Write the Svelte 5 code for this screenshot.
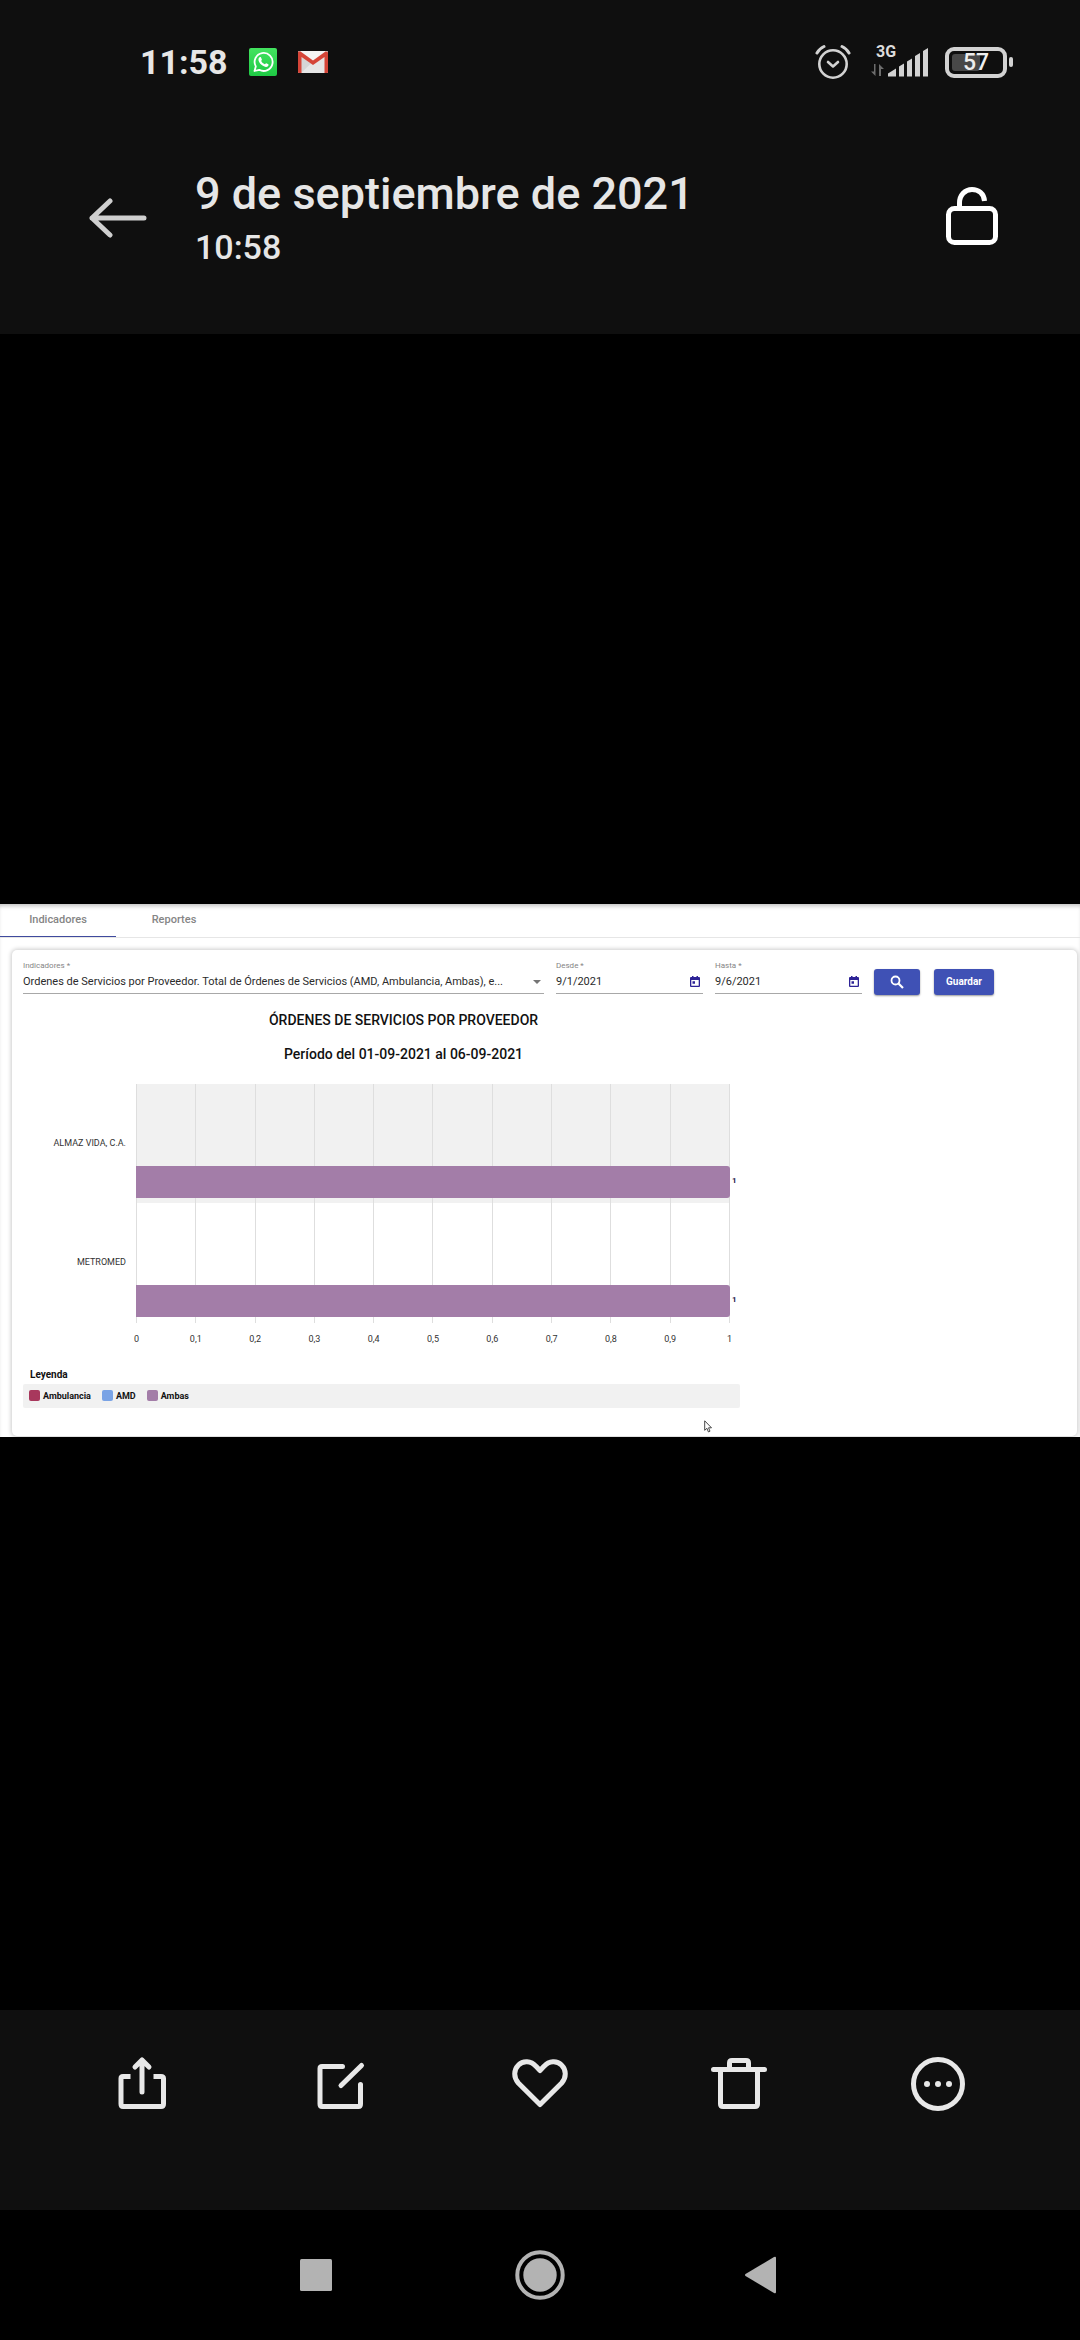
<script>
  const ticks = ['0', '0,1', '0,2', '0,3', '0,4', '0,5', '0,6', '0,7', '0,8', '0,9', '1'];
  const providers = [
    { name: 'ALMAZ VIDA, C.A.', value: 1 },
    { name: 'METROMED', value: 1 }
  ];
  const legend = [
    { label: 'Ambulancia', tone: 'red' },
    { label: 'AMD', tone: 'blue' },
    { label: 'Ambas', tone: 'purple' }
  ];
  const dates = [
    { id: 'desde', label: 'Desde *', value: '9/1/2021' },
    { id: 'hasta', label: 'Hasta *', value: '9/6/2021' }
  ];
</script>

<div class="screen">
  <header class="top">
    <div class="status">
      <div class="status-group">
        <span class="clock">11:58</span>
        <svg class="whatsapp" viewBox="0 0 28 28" width="28" height="28" aria-label="WhatsApp">
          <defs>
            <linearGradient id="wa" x1="0" y1="0" x2="0" y2="1">
              <stop offset="0" stop-color="#43e35f" />
              <stop offset="1" stop-color="#1fca45" />
            </linearGradient>
          </defs>
          <rect width="28" height="28" rx="2" fill="url(#wa)" />
          <path d="M5.5 23l1.3-4.6a9 9 0 1 1 3.4 3.4z" fill="none" stroke="#fff" stroke-width="1.8" stroke-linejoin="round" />
          <path d="M10.6 9.3c.5-.5 1.2-.4 1.4.1l.9 2c.2.4-.7 1.2-.7 1.6.8 1.5 1.9 2.5 3.5 3.2.5.1 1.1-1.2 1.6-1l2 1c.5.3.2 1.6-.4 2.1-1.5 1.2-3.8.6-6.1-1.2-2.2-1.9-3.7-4.4-3.3-6.2.1-.6.5-1.1 1.1-1.6z" fill="#fff" />
        </svg>
        <svg class="gmail" viewBox="0 0 30 22" width="30" height="22" aria-label="Gmail">
          <rect width="30" height="22" rx="1" fill="#e6e6e6" />
          <path d="M3 5l12 8 12-8V0H3z" fill="#f4f4f4" />
          <path d="M3 22L13 12.5 3 6z" fill="#d5d5d5" />
          <path d="M0 1v20q0 1 1 1h2.5V6L15 14 26.500 6v16H29q1 0 1-1V1.500Q29 0 27.500.5L15 9.500 2.500.5Q.5-.3 0 1z" fill="#d54538" />
        </svg>
      </div>
      <div class="status-group">
        <svg viewBox="0 0 36 36" width="36" height="36" fill="none" stroke="#d2d2d2" stroke-linecap="round" aria-label="Alarma">
          <circle cx="18" cy="20" r="13.7" stroke-width="2.6" />
          <path d="M13 18l5 4.5 5-4.5" stroke-width="2.6" stroke-linejoin="round" />
          <path d="M2 9Q4.500 4.500 9 2.500M34 9Q31.500 4.500 27 2.500" stroke-width="3" />
        </svg>
        <div class="network">
          <span class="net-type">3G</span>
          <svg viewBox="0 0 58 30" width="58" height="30" aria-label="Señal">
            <path d="M4.500 17v12L0 24.500h3V17zM8 29V17l5 5h-3v7z" fill="#6d6d6d" />
            <path d="M17 29.500v-3l8-5v8zM28 29.500v-10l5-3v13zM36 29.500V14.500l5-3v18zM44 29.500V9l5-3v23.500zM52 29.500V4l5-3v28.500z" fill="#d2d2d2" />
          </svg>
        </div>
        <div class="battery">
          <div class="cell"><i></i><span>57</span></div>
          <b></b>
        </div>
      </div>
    </div>
    <div class="titlebar">
      <button class="plain" aria-label="Atrás">
        <svg viewBox="0 0 58 40" width="58" height="40" fill="none" stroke="#cfcfcf" stroke-width="5" stroke-linecap="round" stroke-linejoin="round">
          <path d="M55 20H3M21 3L3 20l18 17" />
        </svg>
      </button>
      <div class="heading">
        <h1>9 de septiembre de 2021</h1>
        <p>10:58</p>
      </div>
      <button class="plain" aria-label="Desbloquear">
        <svg viewBox="0 0 52 62" width="52" height="62" fill="none" stroke="#fff" stroke-width="5">
          <rect x="2.5" y="21.5" width="47" height="34" rx="6" />
          <path d="M13.500 21V16C13.500 8 19 2.500 26 2.500c6.500 0 12 4 12.500 11.500" />
        </svg>
      </button>
    </div>
  </header>

  <main class="viewer">
    <section class="shot">
      <div class="tabs" role="tablist">
        <button role="tab" aria-selected="true" class="tab active">Indicadores</button>
        <button role="tab" aria-selected="false" class="tab">Reportes</button>
      </div>
      <div class="card">
        <form class="filters">
          <div class="field wide">
            <label for="indicador">Indicadores *</label>
            <div class="control">
              <select id="indicador">
                <option>Ordenes de Servicios por Proveedor. Total de Órdenes de Servicios (AMD, Ambulancia, Ambas), e...</option>
              </select>
              <svg viewBox="0 0 8 4" width="8" height="4"><path d="M0 0h8L4 4z" fill="#757575" /></svg>
            </div>
          </div>
          {#each dates as d}
            <div class="field">
              <label for={d.id}>{d.label}</label>
              <div class="control">
                <input id={d.id} type="text" value={d.value} />
                <svg viewBox="0 0 10 11" width="10" height="11">
                  <path d="M1 1h1V0h1.500v1h3V0H8v1h1q1 0 1 1v8q0 1-1 1H1q-1 0-1-1V2q0-1 1-1zm.3 3v5.700h7.400V4zM2.500 5.200H5V7.700H2.500z" fill="#2d2396" fill-rule="evenodd" />
                </svg>
              </div>
            </div>
          {/each}
          <button type="button" class="action search" aria-label="Buscar">
            <svg viewBox="0 0 14 14" width="14" height="14" fill="none" stroke="#fff">
              <circle cx="5.5" cy="5.5" r="4" stroke-width="1.8" />
              <path d="M8.500 8.500l4.500 4.500" stroke-width="2.2" />
            </svg>
          </button>
          <button type="button" class="action save">Guardar</button>
        </form>

        <div class="report">
          <div class="chart">
            <h2>ÓRDENES DE SERVICIOS POR PROVEEDOR</h2>
            <h2>Período del 01-09-2021 al 06-09-2021</h2>
            <div class="plot">
              <div class="lines">{#each ticks as _}<i></i>{/each}</div>
              {#each providers as p}
                <div class="row">
                  <span class="name">{p.name}</span>
                  <div class="track"><div class="bar" style:width="{p.value * 100}%"></div></div>
                  <span class="value">{p.value}</span>
                </div>
              {/each}
            </div>
            <div class="axis">{#each ticks as t}<span>{t}</span>{/each}</div>
            <h3>Leyenda</h3>
            <ul class="legend">
              {#each legend as l}
                <li><i class={l.tone}></i>{l.label}</li>
              {/each}
            </ul>
          </div>
        </div>
      </div>
      <svg class="cursor" viewBox="0 0 9 13" width="9" height="13">
        <path d="M.7.8v9.500l2.200-2 1.500 3.600 1.600-.7-1.500-3.400h3z" fill="#fff" stroke="#333" stroke-width=".9" />
      </svg>
    </section>
  </main>

  <div class="toolbar">
    <button class="plain" aria-label="Compartir">
      <svg viewBox="0 0 56 56" width="56" height="56">
        <path d="M16.500 20.500H9q-2 0-2 2V48q0 2.500 2 2.500h38q2.500 0 2.500-2.500V22.500q0-2-2.500-2h-7.500" />
        <path class="round" d="M28 36V4M21 11l7-7 7 7" />
      </svg>
    </button>
    <button class="plain" aria-label="Editar">
      <svg viewBox="0 0 56 56" width="56" height="56">
        <path class="round" d="M29.500 10.500H9q-2 0-2 2V48q0 2.500 2 2.500h36.500q2 0 2-2.500V28.500M28 29.500L48.500 9.500" />
      </svg>
    </button>
    <button class="plain" aria-label="Favorito">
      <svg viewBox="0 0 56 56" width="56" height="56">
        <path class="round" d="M28 14.500L24 10.300C19 4.500 11 4.200 6.500 9 1.500 14 1.500 21.500 6.300 27L28 48.500 49.700 27c4.800-5.500 4.800-13-.2-18C45 4.200 37 4.500 32 10.300z" />
      </svg>
    </button>
    <button class="plain" aria-label="Eliminar">
      <svg viewBox="0 0 56 56" width="56" height="56">
        <path class="round" d="M2.500 13.500h51M9.500 14v34q0 2.500 2.500 2.500h32q2.500 0 2.500-2.500V14M18.500 13V7q0-2.500 2.500-2.500h14q2.500 0 2.500 2.500v6" />
      </svg>
    </button>
    <button class="plain" aria-label="Más">
      <svg viewBox="0 0 56 56" width="56" height="56">
        <circle cx="28" cy="28" r="24.5" />
        <g class="dots"><circle cx="17" cy="28" r="3" /><circle cx="28" cy="28" r="3" /><circle cx="39" cy="28" r="3" /></g>
      </svg>
    </button>
  </div>

  <nav class="nav">
    <button class="plain" aria-label="Recientes">
      <svg viewBox="0 0 50 50" width="50" height="50"><rect x="9" y="9" width="32" height="32" rx="1.5" /></svg>
    </button>
    <button class="plain" aria-label="Inicio">
      <svg viewBox="0 0 50 50" width="50" height="50">
        <circle cx="25" cy="25" r="22.7" fill="none" stroke="#b3b3b3" stroke-width="4" />
        <circle cx="25" cy="25" r="16.7" />
      </svg>
    </button>
    <button class="plain" aria-label="Volver">
      <svg viewBox="0 0 50 50" width="50" height="50"><path d="M6.500 24q-1 1 0 2l28.500 17q2 1 2-1V8q0-2-2-1z" /></svg>
    </button>
  </nav>
</div>

<style>
  :global(body) { margin: 0; background: #000; }
  * { box-sizing: border-box; }
  svg { display: block; flex: none; }
  h1, h2, h3, p, ul { margin: 0; padding: 0; }
  .screen {
    min-height: 100vh;
    display: flex;
    flex-direction: column;
    background: #000;
    font-family: Roboto, "Liberation Sans", sans-serif;
  }
  .plain { border: 0; padding: 0; background: none; display: flex; align-items: center; justify-content: center; }

  .top { background: #0f0f0f; padding-bottom: 63px; }
  .status { display: flex; justify-content: space-between; padding: 42px 67px 2px 140px; }
  .status-group { display: flex; align-items: center; height: 40px; }
  .clock { font-size: 34px; line-height: 40px; font-weight: 700; color: #e6e6e6; }
  .whatsapp { margin-left: 21px; }
  .gmail { margin-left: 21px; }
  .network { position: relative; margin: 0 16px 0 20px; }
  .net-type { position: absolute; left: 5px; top: -4px; font-size: 16px; line-height: 18px; font-weight: 700; color: #dcdcdc; }
  .battery { display: flex; align-items: center; gap: 2px; }
  .cell { position: relative; width: 62px; height: 31px; border: 4px solid #d2d2d2; border-radius: 9px; display: flex; align-items: center; justify-content: center; }
  .cell i { position: absolute; left: 3px; top: 3px; width: 28px; height: 17px; border-radius: 3px; background: #484848; }
  .cell span { position: relative; font-size: 23px; line-height: 23px; font-weight: 500; color: #eee; }
  .battery b { width: 4px; height: 10px; border-radius: 2px; background: #d2d2d2; }

  .titlebar { display: flex; align-items: center; padding: 80px 82px 0 89px; }
  .heading { flex: 1; margin-left: 48px; color: #e6e6e6; }
  h1 { font-size: 45px; line-height: 60px; font-weight: 500; }
  .heading p { font-size: 34px; line-height: 47px; font-weight: 500; }

  .viewer { flex: 1; display: flex; align-items: center; padding-bottom: 4px; }
  .shot { position: relative; flex: 1; min-width: 0; background: #fff; padding-bottom: 1px; overflow: hidden; box-shadow: inset 0 4px 4px -2px rgba(0, 0, 0, 0.25); }
  .tabs { display: flex; height: 34px; border-bottom: 1px solid #e6e6e6; }
  .tab { width: 116px; border: 0; border-bottom: 1px solid transparent; background: none; padding: 0; font: 500 11px/30px Roboto, sans-serif; color: #858585; }
  .tab.active { border-bottom-color: #3f4a9e; }

  .card { margin: 12px 3px 0 12px; padding: 10px 11px 28px; border-radius: 5px; background: #fff; box-shadow: 0 0 4px 1px rgba(0, 0, 0, 0.2); }
  .filters { display: flex; align-items: flex-start; }
  .field { width: 147px; margin-right: 12px; border-bottom: 1px solid #a8a8a8; height: 34px; }
  .field.wide { flex: 1; }
  .field label { display: block; font-size: 8px; line-height: 12px; color: #858585; }
  .control { display: flex; align-items: center; height: 20px; padding-right: 3px; }
  select, input { flex: 1; min-width: 0; width: 100%; height: 20px; border: 0; padding: 0; margin: 0; background: none; appearance: none; font: 400 11px/20px Roboto, sans-serif; color: #2b2b2b; outline: 0; }
  .action { height: 26px; margin-top: 9px; border: 0; border-radius: 3px; padding: 0; background: #3f51b5; color: #fff; font: 700 10px/26px Roboto, sans-serif; box-shadow: 0 1px 2px rgba(0, 0, 0, 0.4); display: flex; align-items: center; justify-content: center; }
  .search { width: 46px; }
  .save { width: 60px; margin: 9px 72px 0 14px; }

  .report { display: grid; grid-template-columns: 11fr 5fr; }
  .chart { padding-top: 16px; }
  h2 { font-size: 14px; line-height: 18px; font-weight: 500; text-align: center; color: #111; padding-left: 44px; margin-bottom: 16px; }
  .plot { position: relative; margin-top: 21px; padding-bottom: 1px; }
  .lines { position: absolute; inset: 0 10px 0 113px; display: flex; justify-content: space-between; z-index: 1; }
  .lines i { width: 1px; background: #dedede; }
  .row { display: grid; grid-template-columns: 113px 1fr 10px; height: 119px; }
  .name { align-self: center; justify-self: end; padding-right: 10px; font-size: 9px; line-height: 12px; color: #333; }
  .track { display: flex; align-items: flex-end; padding-bottom: 5px; }
  .row:nth-child(2) .track { background: #f1f1f1; }
  .bar { position: relative; z-index: 2; height: 32px; border-radius: 0 3px 3px 0; background: #a37da8; }
  .value { align-self: end; padding: 0 0 16px 2px; font-size: 8px; line-height: 12px; font-weight: 700; color: #1b1b4b; }
  .axis { display: flex; justify-content: space-between; margin: 10px 10px 0 113px; font-size: 9px; line-height: 12px; color: #333; }
  .axis span { width: 1px; display: flex; justify-content: center; }
  h3 { margin: 23px 0 2px 7px; font-size: 10px; line-height: 14px; font-weight: 700; color: #111; }
  .legend { list-style: none; display: flex; gap: 11px; height: 24px; padding: 0 6px; align-items: center; border-radius: 2px; background: #f1f1f1; font-size: 9px; line-height: 12px; font-weight: 700; color: #111; }
  .legend li { display: flex; align-items: center; gap: 3px; }
  .legend i { width: 11px; height: 11px; border-radius: 2px; }
  .red { background: #a8385d; }
  .blue { background: #7aa3e5; }
  .purple { background: #a37da8; }
  .cursor { position: absolute; right: 367px; bottom: 4px; }

  .toolbar { display: flex; padding: 46px 42px 98px; background: #0f0f0f; }
  .toolbar .plain, .nav .plain { flex: 1; }
  .toolbar svg { fill: none; stroke: #e8e8e8; stroke-width: 5; }
  .toolbar .round { stroke-linecap: round; stroke-linejoin: round; }
  .toolbar .dots { fill: #e8e8e8; stroke: none; }
  .nav { display: flex; padding: 40px 204px; background: #000; }
  .nav svg { fill: #b3b3b3; }
</style>
